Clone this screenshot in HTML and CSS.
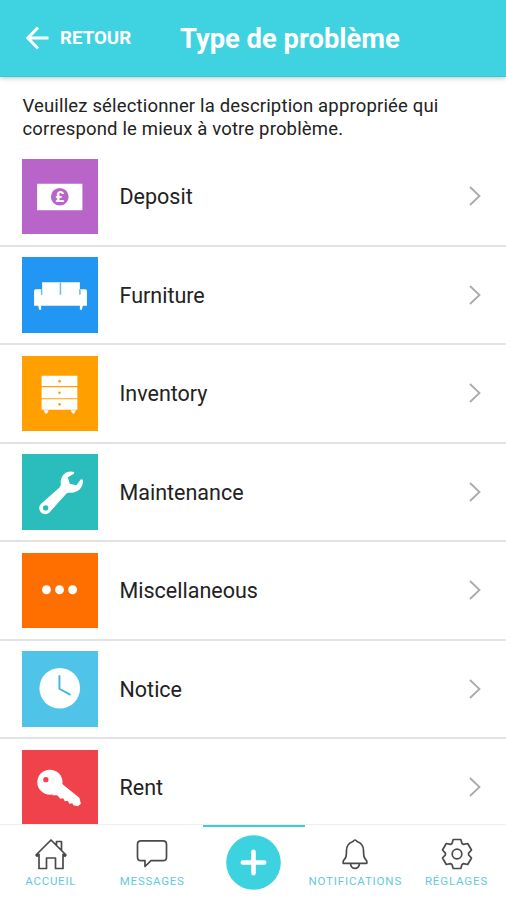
FILE: index.html
```html
<!DOCTYPE html>
<html lang="fr">
<head>
<meta charset="utf-8">
<title>Type de problème</title>
<link rel="stylesheet" href="styles.css">
</head>
<body>
<div class="app">
  <header class="header">
    <div class="back">
      <svg width="24" height="24" viewBox="0 0 24 24"><path d="M22.500 12H2M12 1.500L1.900 12l10.100 10.500" fill="none" stroke="#fff" stroke-width="3"/></svg>
      <span class="back-label">RETOUR</span>
    </div>
    <h1 class="title">Type de problème</h1>
  </header>
  <main class="content">
    <p class="intro">Veuillez sélectionner la description appropriée qui<br>correspond le mieux à votre problème.</p>
    <ul class="list">
      <li class="row">
        <svg class="tile deposit" viewBox="0 0 75 75"><path fill="#fff" d="M15 24.500h45v26.500H15z"/><circle cx="37.500" cy="37.500" r="8.800" fill="#b964c9"/><text class="pound" x="37.500" y="43" text-anchor="middle">£</text></svg>
        <span class="label">Deposit</span>
        <svg class="chevron" viewBox="0 0 12 20"><path d="M1 1l9.500 9L1 19"/></svg>
      </li>
      <li class="row">
        <svg class="tile furniture" viewBox="0 0 75 75"><g fill="#fff"><path d="M20 25h37.500v7H63q1.500 0 1.500 2v14.500H12V34q0-2 1.500-2H20z"/><path d="M16 48h3v4.500h-2zM57.500 48h3l-1 4.500h-2z"/></g><path d="M19.500 32v5.500M57.500 32v5.500M38.200 25v12.500" stroke="#6dbaf8" stroke-width="1.500"/></svg>
        <span class="label">Furniture</span>
        <svg class="chevron" viewBox="0 0 12 20"><path d="M1 1l9.500 9L1 19"/></svg>
      </li>
      <li class="row">
        <svg class="tile inventory" viewBox="0 0 75 75"><path fill="#fff" d="M19.500 19.500H55v10.300H19.500zM19.500 31H55v11H19.500zM19.500 43H55v10.300H19.500zM21.500 54h5l-1.500 3h-2zM48.500 54h5l-1.500 3h-2z"/><g fill="#ffa000"><circle cx="37.300" cy="25" r="1.300"/><circle cx="37.300" cy="36.500" r="1.300"/><circle cx="37.300" cy="48" r="1.300"/></g></svg>
        <span class="label">Inventory</span>
        <svg class="chevron" viewBox="0 0 12 20"><path d="M1 1l9.500 9L1 19"/></svg>
      </li>
      <li class="row">
        <svg class="tile maintenance" viewBox="0 0 75 75"><path fill="#fff" d="M52 18C44.500 15.500 38 21 38.500 29c.1 2-.3 3.300-1.500 4.500L19 49.500c-3 3-2 7 .3 8.800 2.700 2.300 6.500 1.800 8.700-1L43.500 40c1.300-1.500 2.800-1.800 4.500-1.500C55.500 39 61.500 33 60.500 25.500L58.500 25 54 31 47.500 29.500 45.500 23 51.500 19.500z"/><circle cx="23.500" cy="53.500" r="2.700" fill="#2abdbb"/></svg>
        <span class="label">Maintenance</span>
        <svg class="chevron" viewBox="0 0 12 20"><path d="M1 1l9.500 9L1 19"/></svg>
      </li>
      <li class="row">
        <svg class="tile misc" viewBox="0 0 75 75"><g fill="#fff"><circle cx="24.300" cy="36.500" r="4.400"/><circle cx="37.300" cy="36.500" r="4.400"/><circle cx="50.300" cy="36.500" r="4.400"/></g></svg>
        <span class="label">Miscellaneous</span>
        <svg class="chevron" viewBox="0 0 12 20"><path d="M1 1l9.500 9L1 19"/></svg>
      </li>
      <li class="row">
        <svg class="tile notice" viewBox="0 0 75 75"><circle cx="37.500" cy="37" r="20.200" fill="#fff"/><path d="M37.200 24v13.500l11 6" fill="none" stroke="#3bb9dc" stroke-width="1.900"/></svg>
        <span class="label">Notice</span>
        <svg class="chevron" viewBox="0 0 12 20"><path d="M1 1l9.500 9L1 19"/></svg>
      </li>
      <li class="row">
        <svg class="tile rent" viewBox="0 0 75 75"><g fill="#fff"><circle cx="27.700" cy="32" r="12.500"/><path d="M39 33l18 14.500 1.500 6-3 2.500-4.500-1-1-2-3 .5-1.500-3-3 .5-1.500-3-3 .5-3-3.500-5 0z"/></g><circle cx="23.700" cy="29.500" r="2.600" fill="#f0424b"/></svg>
        <span class="label">Rent</span>
        <svg class="chevron" viewBox="0 0 12 20"><path d="M1 1l9.500 9L1 19"/></svg>
      </li>
    </ul>
  </main>
  <nav class="tabs">
    <div class="tab">
      <svg class="tab-icon" viewBox="-17 -17 34 34"><path d="M-15 1L0-14 15 1l-1 1.200-2-1.900V14.500H4.500V4h-9v10.500H-12V.3l-2 1.900zM5.500-8.500V-12.500H10.500v8.500"/></svg>
      <span class="tab-label">ACCUEIL</span>
    </div>
    <div class="tab">
      <svg class="tab-icon" viewBox="-17 -17 34 34"><path d="M-11-13.200H11q3.500 0 3.500 3.500V3q0 3.700-3.500 3.700H-1L-7 12.500V6.700H-11q-3.500 0-3.500-3.700V-9.700q0-3.500 3.500-3.500z"/></svg>
      <span class="tab-label">MESSAGES</span>
    </div>
    <div class="tab active">
      <svg class="add" viewBox="0 0 55 55"><circle cx="27.500" cy="27.500" r="27.300" fill="#3dd2e0"/><path d="M16.800 27.500h21.400M27.500 16.800v21.400" stroke="#fff" stroke-width="4.600" stroke-linecap="round"/></svg>
    </div>
    <div class="tab">
      <svg class="tab-icon" viewBox="-17 -17 34 34"><path d="M-2-12.500q2-3 4 0C6.500-11 8.500-7.500 8.500-3.500c0 6 .5 7.500 3.300 10.500v2.300h-23.600V7C-9 4-8.500 2.500-8.500-3.500c0-4 2-7.500 6.500-9zM-4.500 9.300c0 6.700 9 6.700 9 0"/></svg>
      <span class="tab-label wide">NOTIFICATIONS</span>
    </div>
    <div class="tab">
      <svg class="tab-icon" viewBox="-17 -17 34 34"><path d="M-5-10.500L-3.800-14.500H3.800L5-10.500 6.600-9.600 10.700-10.500 14.500-4 11.600-.9V.9L14.500 4 10.700 10.500 6.600 9.600 5 10.500 3.800 14.500H-3.800L-5 10.500-6.600 9.600-10.700 10.500-14.500 4-11.600.9V-.9L-14.500-4-10.700-10.500-6.600-9.600z"/><circle r="4.800"/></svg>
      <span class="tab-label wide">RÉGLAGES</span>
    </div>
  </nav>
</div>
</body>
</html>
```
FILE: styles.css
```css
* { box-sizing: border-box; }
body { margin: 0; background: #fff; font-family: Roboto, "Liberation Sans", sans-serif; color: #222; }
.app { width: 506px; height: 900px; display: flex; flex-direction: column; overflow: hidden; }
.header { height: 76.500px; flex: none; display: flex; align-items: center; padding-left: 26px; background: #3fd2e0; border-bottom: 1px solid #35c9d7; box-shadow: 0 1px 5px rgba(0,0,0,.25); color: #fff; }
.back { display: flex; align-items: center; width: 154px; gap: 10px; }
.back svg { flex: none; }
.back-label { font-size: 18.700px; font-weight: 700; line-height: 24px; }
.title { margin: 0; font-size: 27.350px; font-weight: 700; line-height: 34px; white-space: nowrap; padding-top: 2px; }
.content { flex: 1; min-height: 0; overflow: hidden; padding-top: 18.500px; }
.intro { margin: 0 0 7px; padding-left: 22.500px; font-size: 18.500px; line-height: 23px; white-space: nowrap; letter-spacing: .16px; }
.list { list-style: none; margin: 0; padding: 0; }
.row { height: 98.500px; display: flex; align-items: center; padding: 0 25px 0 22px; border-bottom: 2px solid #e2e2e2; }
.tile { width: 75.500px; height: 75.500px; flex: none; }
.label { flex: 1; margin-left: 22px; font-size: 21.500px; line-height: 28px; padding-top: 1.500px; }
.chevron { width: 12px; height: 20px; fill: none; stroke: #aaa; stroke-width: 1.800; }
.deposit { background: #b964c9; }
.furniture { background: #2196f3; }
.inventory { background: #ffa000; }
.maintenance { background: #2abdbb; }
.misc { background: #ff6f00; }
.notice { background: #4fc3e8; }
.rent { background: #f0424b; }
.pound { font: 700 15px Roboto, sans-serif; fill: #fff; }
.tabs { height: 76px; flex: none; display: grid; grid-template-columns: 101.500px 101.500px 101.500px 101.500px 101px; border-top: 1px solid #eee; background: #fff; }
.tab { display: flex; flex-direction: column; align-items: center; padding-top: 12px; }
.active { padding-top: 8px; border-top: 2.500px solid #3dccd9; }
.tab-icon { width: 34px; height: 34px; flex: none; fill: none; stroke: #4a4a4a; stroke-width: 1.700; stroke-linejoin: round; }
.add { width: 55px; height: 55px; }
.tab-label { font-size: 11.500px; line-height: 14px; margin-top: 3px; letter-spacing: .75px; color: #5fcbd6; white-space: nowrap; }
.wide { letter-spacing: .85px; }
```
